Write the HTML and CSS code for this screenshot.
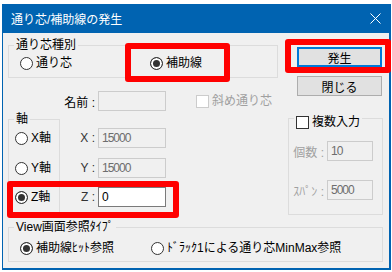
FILE: index.html
```html
<!DOCTYPE html>
<html lang="ja">
<head>
    <meta charset="UTF-8">
    <title>通り芯/補助線の発生</title>
    <link rel="stylesheet" href="styles.css">
</head>
<body>
    <div class="window">
        <div class="titlebar">
            <span class="title">通り芯/補助線の発生</span>
            <svg class="close" width="11" height="11" viewBox="0 0 11 11">
                <path d="M0.5 0.5L10.5 10.5M10.5 0.5L0.5 10.5" stroke="#fff" stroke-width="1" fill="none"/>
            </svg>
        </div>

        <div class="client">
            <div class="main">
                <!-- left column -->
                <div class="left">
                    <fieldset class="group kind">
                        <legend>通り芯種別</legend>
                        <div class="kind-row">
                            <label class="opt"><span class="radio"></span>通り芯</label>
                            <label class="opt"><span class="radio on"></span>補助線</label>
                        </div>
                    </fieldset>

                    <div class="name-row">
                        <span class="lbl">名前 :</span>
                        <span class="field"></span>
                        <label class="opt diag"><span class="check off"></span>斜め通り芯</label>
                    </div>

                    <div class="axis-row">
                        <fieldset class="group axis">
                            <legend>軸</legend>
                            <div class="rows">
                                <div class="row"><label class="opt"><span class="radio"></span>X軸</label></div>
                                <div class="row"><label class="opt"><span class="radio"></span>Y軸</label></div>
                                <div class="row"><label class="opt"><span class="radio on"></span>Z軸</label></div>
                            </div>
                        </fieldset>
                        <div class="rows coords">
                            <div class="row"><span class="lbl">X :</span><span class="field">15000</span></div>
                            <div class="row"><span class="lbl">Y :</span><span class="field">15000</span></div>
                            <div class="row"><span class="lbl">Z :</span><span class="field on">0</span></div>
                        </div>
                    </div>
                </div>

                <!-- right column -->
                <div class="right">
                    <button class="btn default">発生</button>
                    <button class="btn">閉じる</button>
                    <fieldset class="group multi">
                        <legend><span class="check"></span>複数入力</legend>
                        <div class="row dim"><span class="lbl">個数 :</span><span class="field short">10</span></div>
                        <div class="row dim"><span class="lbl">ｽﾊﾟﾝ :</span><span class="field short">5000</span></div>
                    </fieldset>
                </div>
            </div>

            <fieldset class="group view">
                <legend>View画面参照ﾀｲﾌﾟ</legend>
                <div class="view-row">
                    <label class="opt"><span class="radio on"></span>補助線ﾋｯﾄ参照</label>
                    <label class="opt"><span class="radio"></span>ﾄﾞﾗｯｸ1による通り芯MinMax参照</label>
                </div>
            </fieldset>
        </div>

        <!-- red markers -->
        <div class="mark m1"></div>
        <div class="mark m2"></div>
        <div class="mark m3"></div>
    </div>
</body>
</html>
```

FILE: styles.css
```css
* {
    box-sizing: border-box;
}
body {
    margin: 0;
    background: #fff;
    font-family: "Liberation Sans", "Noto Sans CJK JP", sans-serif;
    font-size: 12px;
    color: #000;
}
.window {
    position: relative;
    width: 389px;
    height: 266px;
    margin: 4px 0 0 2px;
    border: 1px solid #0063b1;
    border-width: 0 2px 2px 1px;
    background: #f0f0f0;
}
.titlebar {
    display: flex;
    align-items: center;
    justify-content: space-between;
    height: 29px;
    padding: 0 8px;
    background: #0063b1;
    color: #fff;
}
.client {
    padding: 5px 0 0 5px;
}
.main {
    display: flex;
}
.left {
    width: 270px;
}
.right {
    width: 95px;
    margin-left: 10px;
}

/* group boxes */
.group {
    margin: 0;
    padding: 0;
    min-width: 0;
    border: 1px solid #dcdcdc;
}
.group legend {
    margin-left: 5px;
    padding: 0 2px;
    line-height: 14px;
}
.kind {
    height: 40px;
}
.kind-row {
    display: flex;
    margin: 4px 0 0 11px;
}
.kind-row .opt:first-child {
    width: 130px;
}

/* radio / check */
.opt {
    display: flex;
    align-items: center;
    gap: 3px;
    height: 14px;
    line-height: 14px;
}
.radio {
    flex: none;
    width: 13px;
    height: 13px;
    border: 1px solid #333;
    border-radius: 50%;
    background: #fff;
}
.radio.on {
    background: #333;
    box-shadow: inset 0 0 0 2px #fff;
}
.check {
    flex: none;
    width: 13px;
    height: 13px;
    border: 1px solid #333;
    background: #fff;
}
.check.off {
    border-color: #cccccc;
}

/* text fields */
.lbl {
    width: 38px;
    padding-right: 3px;
    text-align: right;
    color: #333;
}
.field {
    width: 68px;
    height: 20px;
    padding-left: 3px;
    border: 1px solid #cccccc;
    background: #f0f0f0;
    line-height: 18px;
    color: #6d6d6d;
    letter-spacing: -1px;
}
.field.on {
    border-color: #7a7a7a;
    background: #fff;
    color: #000;
}
.field.short {
    width: 46px;
}
.name-row {
    display: flex;
    align-items: center;
    height: 20px;
    margin-top: 13px;
    padding-left: 52px;
}
.name-row .lbl {
    color: #000;
}
.diag {
    margin-left: 30px;
    color: #a0a0a0;
}

/* axis */
.axis-row {
    display: flex;
    margin-top: 1px;
}
.axis {
    width: 52px;
    height: 102px;
}
.rows {
    padding: 2px 0 0 6px;
}
.coords {
    padding: 0;
    margin-top: 16px;
}
.row {
    display: flex;
    align-items: center;
    height: 20px;
}
.row + .row {
    margin-top: 10px;
}
.rows .row:last-child {
    margin-top: 9px;
}

/* buttons */
.btn {
    display: block;
    width: 85px;
    height: 20px;
    margin: 9px 0 0 9px;
    padding: 0;
    border: 1px solid #adadad;
    background: #e1e1e1;
    font: inherit;
    color: #000;
}
.btn.default {
    border: 2px solid #0078d7;
}

/* multi input */
.multi {
    height: 107px;
    margin-top: 12px;
}
.multi legend {
    display: flex;
    align-items: center;
    gap: 3px;
    padding-top: 7px;
}
.multi .row:first-of-type {
    margin-top: 12px;
}
.multi .row + .row {
    margin-top: 19px;
}
.dim .lbl {
    color: #a0a0a0;
}

/* view type */
.view {
    width: 375px;
    height: 42px;
    margin-top: 5px;
}
.view-row {
    display: flex;
    margin: 7px 0 0 11px;
}
.view-row .opt:first-child {
    width: 131px;
}

/* red annotation boxes */
.mark {
    position: absolute;
    border: 6px solid #ff0000;
    border-radius: 3px;
}
.m1 {
    left: 122px;
    top: 39px;
    width: 105px;
    height: 39px;
}
.m2 {
    left: 282px;
    top: 35px;
    width: 106px;
    height: 34px;
}
.m3 {
    left: 4px;
    top: 177px;
    width: 172px;
    height: 37px;
}
```
